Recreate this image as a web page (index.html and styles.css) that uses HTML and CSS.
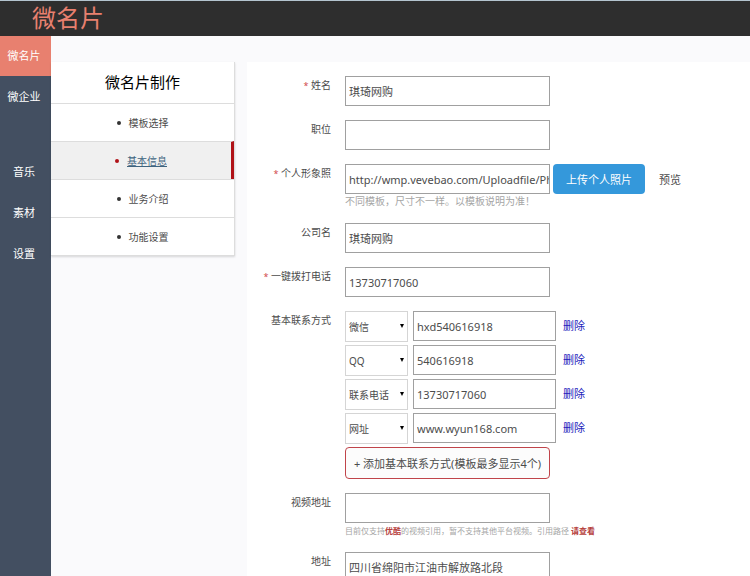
FILE: index.html
```html
<!DOCTYPE html>
<html lang="zh-CN">
<head>
    <meta charset="UTF-8">
    <meta name="viewport" content="width=device-width, initial-scale=1.0">
    <title>微名片</title>
    <link rel="stylesheet" href="styles.css">
</head>
<body>

    <!-- Top bar -->
    <header class="topbar">
        <a class="logo" href="#">微名片</a>
    </header>

    <div class="page">
        <!-- Main navigation -->
        <nav class="sidebar">
            <a class="active" href="#">微名片</a>
            <a href="#">微企业</a>
            <a class="group" href="#">音乐</a>
            <a href="#">素材</a>
            <a href="#">设置</a>
        </nav>

        <!-- Sub menu -->
        <aside class="submenu">
            <h1>微名片制作</h1>
            <ul>
                <li><a href="#">模板选择</a></li>
                <li class="current"><a href="#">基本信息</a></li>
                <li><a href="#">业务介绍</a></li>
                <li><a href="#">功能设置</a></li>
            </ul>
        </aside>

        <!-- Form -->
        <form class="content">
            <div class="row">
                <label class="name" for="username"><i>*</i> 姓名</label>
                <div class="field">
                    <input type="text" id="username" value="琪琦网购">
                </div>
            </div>

            <div class="row">
                <label class="name" for="position">职位</label>
                <div class="field">
                    <input type="text" id="position">
                </div>
            </div>

            <div class="row">
                <label class="name" for="photo"><i>*</i> 个人形象照</label>
                <div class="field">
                    <div class="line">
                        <input type="text" id="photo" value="http://wmp.vevebao.com/Uploadfile/Photo/">
                        <button type="button" class="upload">上传个人照片</button>
                        <a class="preview" href="#">预览</a>
                    </div>
                    <p class="tip">不同模板，尺寸不一样。以模板说明为准！</p>
                </div>
            </div>

            <div class="row">
                <label class="name" for="company">公司名</label>
                <div class="field">
                    <input type="text" id="company" value="琪琦网购">
                </div>
            </div>

            <div class="row">
                <label class="name" for="phone"><i>*</i> 一键拨打电话</label>
                <div class="field">
                    <input type="text" id="phone" value="13730717060">
                </div>
            </div>

            <div class="row">
                <label class="name" for="contact1">基本联系方式</label>
                <div class="field">
                    <div class="contact">
                        <div class="select">
                            <select aria-label="联系方式1"><option>微信</option></select>
                        </div>
                        <input type="text" id="contact1" value="hxd540616918">
                        <a href="#">删除</a>
                    </div>
                    <div class="contact">
                        <div class="select">
                            <select aria-label="联系方式2"><option>QQ</option></select>
                        </div>
                        <input type="text" aria-label="QQ" value="540616918">
                        <a href="#">删除</a>
                    </div>
                    <div class="contact">
                        <div class="select">
                            <select aria-label="联系方式3"><option>联系电话</option></select>
                        </div>
                        <input type="text" aria-label="联系电话" value="13730717060">
                        <a href="#">删除</a>
                    </div>
                    <div class="contact">
                        <div class="select">
                            <select aria-label="联系方式4"><option>网址</option></select>
                        </div>
                        <input type="text" aria-label="网址" value="www.wyun168.com">
                        <a href="#">删除</a>
                    </div>
                    <button type="button" class="add">+ 添加基本联系方式(模板最多显示4个)</button>
                </div>
            </div>

            <div class="row">
                <label class="name" for="video">视频地址</label>
                <div class="field">
                    <input type="text" id="video">
                    <p class="tip small">目前仅支持<b>优酷</b>的视频引用，暂不支持其他平台视频。引用路径 <a href="#">请查看</a></p>
                </div>
            </div>

            <div class="row">
                <label class="name" for="address">地址</label>
                <div class="field">
                    <input type="text" id="address" value="四川省绵阳市江油市解放路北段">
                </div>
            </div>
        </form>
    </div>

</body>
</html>
```
FILE: styles.css
```css
* {
    margin: 0;
    padding: 0;
    box-sizing: border-box;
}

body {
    min-height: 100vh;
    display: flex;
    flex-direction: column;
    background-color: #fafafc;
    color: #4c4c4c;
    font-family: "Noto Sans", "Noto Sans CJK SC", sans-serif;
    font-size: 11px;
}

a {
    color: inherit;
    text-decoration: none;
}

input,
select,
button {
    font-family: inherit;
    font-size: 11px;
    color: #4c4c4c;
}

/* Top bar */
.topbar {
    height: 36px;
    padding-left: 32px;
    background-color: #2e2e2e;
    border-top: 1px solid #b4c4cf;
}

.logo {
    display: block;
    font-size: 24px;
    line-height: 34px;
    color: #e8806f;
}

.page {
    flex: 1;
    display: flex;
    align-items: flex-start;
}

/* Main navigation */
.sidebar {
    flex: none;
    align-self: stretch;
    width: 51px;
    background-color: #434f61;
}

.sidebar a {
    display: block;
    margin-bottom: 1px;
    padding-right: 3px;
    line-height: 40px;
    text-align: center;
    color: #fff;
}

.sidebar a.active {
    background-color: #e8806f;
}

.sidebar a.group {
    margin-top: 35px;
}

/* Sub menu */
.submenu {
    flex: none;
    width: 184px;
    margin-top: 26px;
    background-color: #fff;
    border-right: 1px solid #ddd;
    border-bottom: 1px solid #ddd;
    box-shadow: 0 1px 2px rgba(0, 0, 0, 0.15);
}

.submenu h1 {
    font-size: 15px;
    font-weight: normal;
    line-height: 41px;
    text-align: center;
    color: #000;
}

.submenu ul {
    list-style: none;
}

.submenu li {
    display: flex;
    align-items: center;
    justify-content: center;
    gap: 8px;
    height: 38px;
    border-top: 1px solid #ddd;
    font-size: 10px;
}

.submenu li::before {
    content: "";
    width: 4px;
    height: 4px;
    border-radius: 50%;
    background-color: #333;
}

.submenu .current {
    background-color: #f0f0f0;
    border-right: 3px solid #b01218;
}

.submenu .current::before {
    background-color: #b01218;
}

.submenu .current a {
    color: #3f647f;
    text-decoration: underline;
}

/* Form */
.content {
    flex: 1;
    min-width: 0;
    margin: 26px 0 0 12px;
    padding: 14px 0;
    background-color: #fff;
}

.row {
    display: flex;
    margin-bottom: 14px;
}

.name {
    flex: none;
    width: 84px;
    margin-right: 14px;
    font-size: 10px;
    line-height: 18px;
    text-align: right;
}

.name i {
    font-size: 9px;
    font-style: normal;
    color: #d04a4a;
}

.field {
    flex: 1;
    min-width: 0;
}

.field input {
    display: block;
    width: 205px;
    height: 30px;
    padding: 0 0 0 3px;
    border: 1px solid #a0a0a0;
    background-color: #fff;
}

.line {
    display: flex;
    align-items: center;
}

.upload {
    width: 92px;
    height: 30px;
    margin: 0 14px 0 3px;
    border: none;
    border-radius: 4px;
    background-color: #3498db;
    color: #fff;
}

.tip {
    font-size: 10px;
    line-height: 15px;
    color: #a5a5a5;
}

.tip.small {
    font-size: 8px;
}

.tip b,
.tip a {
    font-weight: bold;
    color: #b5403c;
}

/* Contact lines */
.contact {
    display: flex;
    align-items: flex-start;
    margin-bottom: 3px;
}

.contact .select {
    position: relative;
    margin-right: 5px;
}

.contact select {
    display: block;
    width: 63px;
    height: 31px;
    padding: 0 3px;
    border: 1px solid #d5d5d5;
    background-color: #fff;
    font-size: 10px;
    appearance: none;
}

.select::after {
    content: "";
    position: absolute;
    top: 13px;
    right: 4px;
    border: 2px solid transparent;
    border-top: 4px solid #000;
    border-bottom: none;
    pointer-events: none;
}

.contact input {
    width: 143px;
}

.contact a {
    margin-left: 7px;
    line-height: 30px;
    color: #2222bb;
}

.add {
    display: block;
    width: 205px;
    height: 32px;
    border: 1px solid #c0444a;
    border-radius: 4px;
    background-color: #fcfcfc;
    white-space: nowrap;
}
```
